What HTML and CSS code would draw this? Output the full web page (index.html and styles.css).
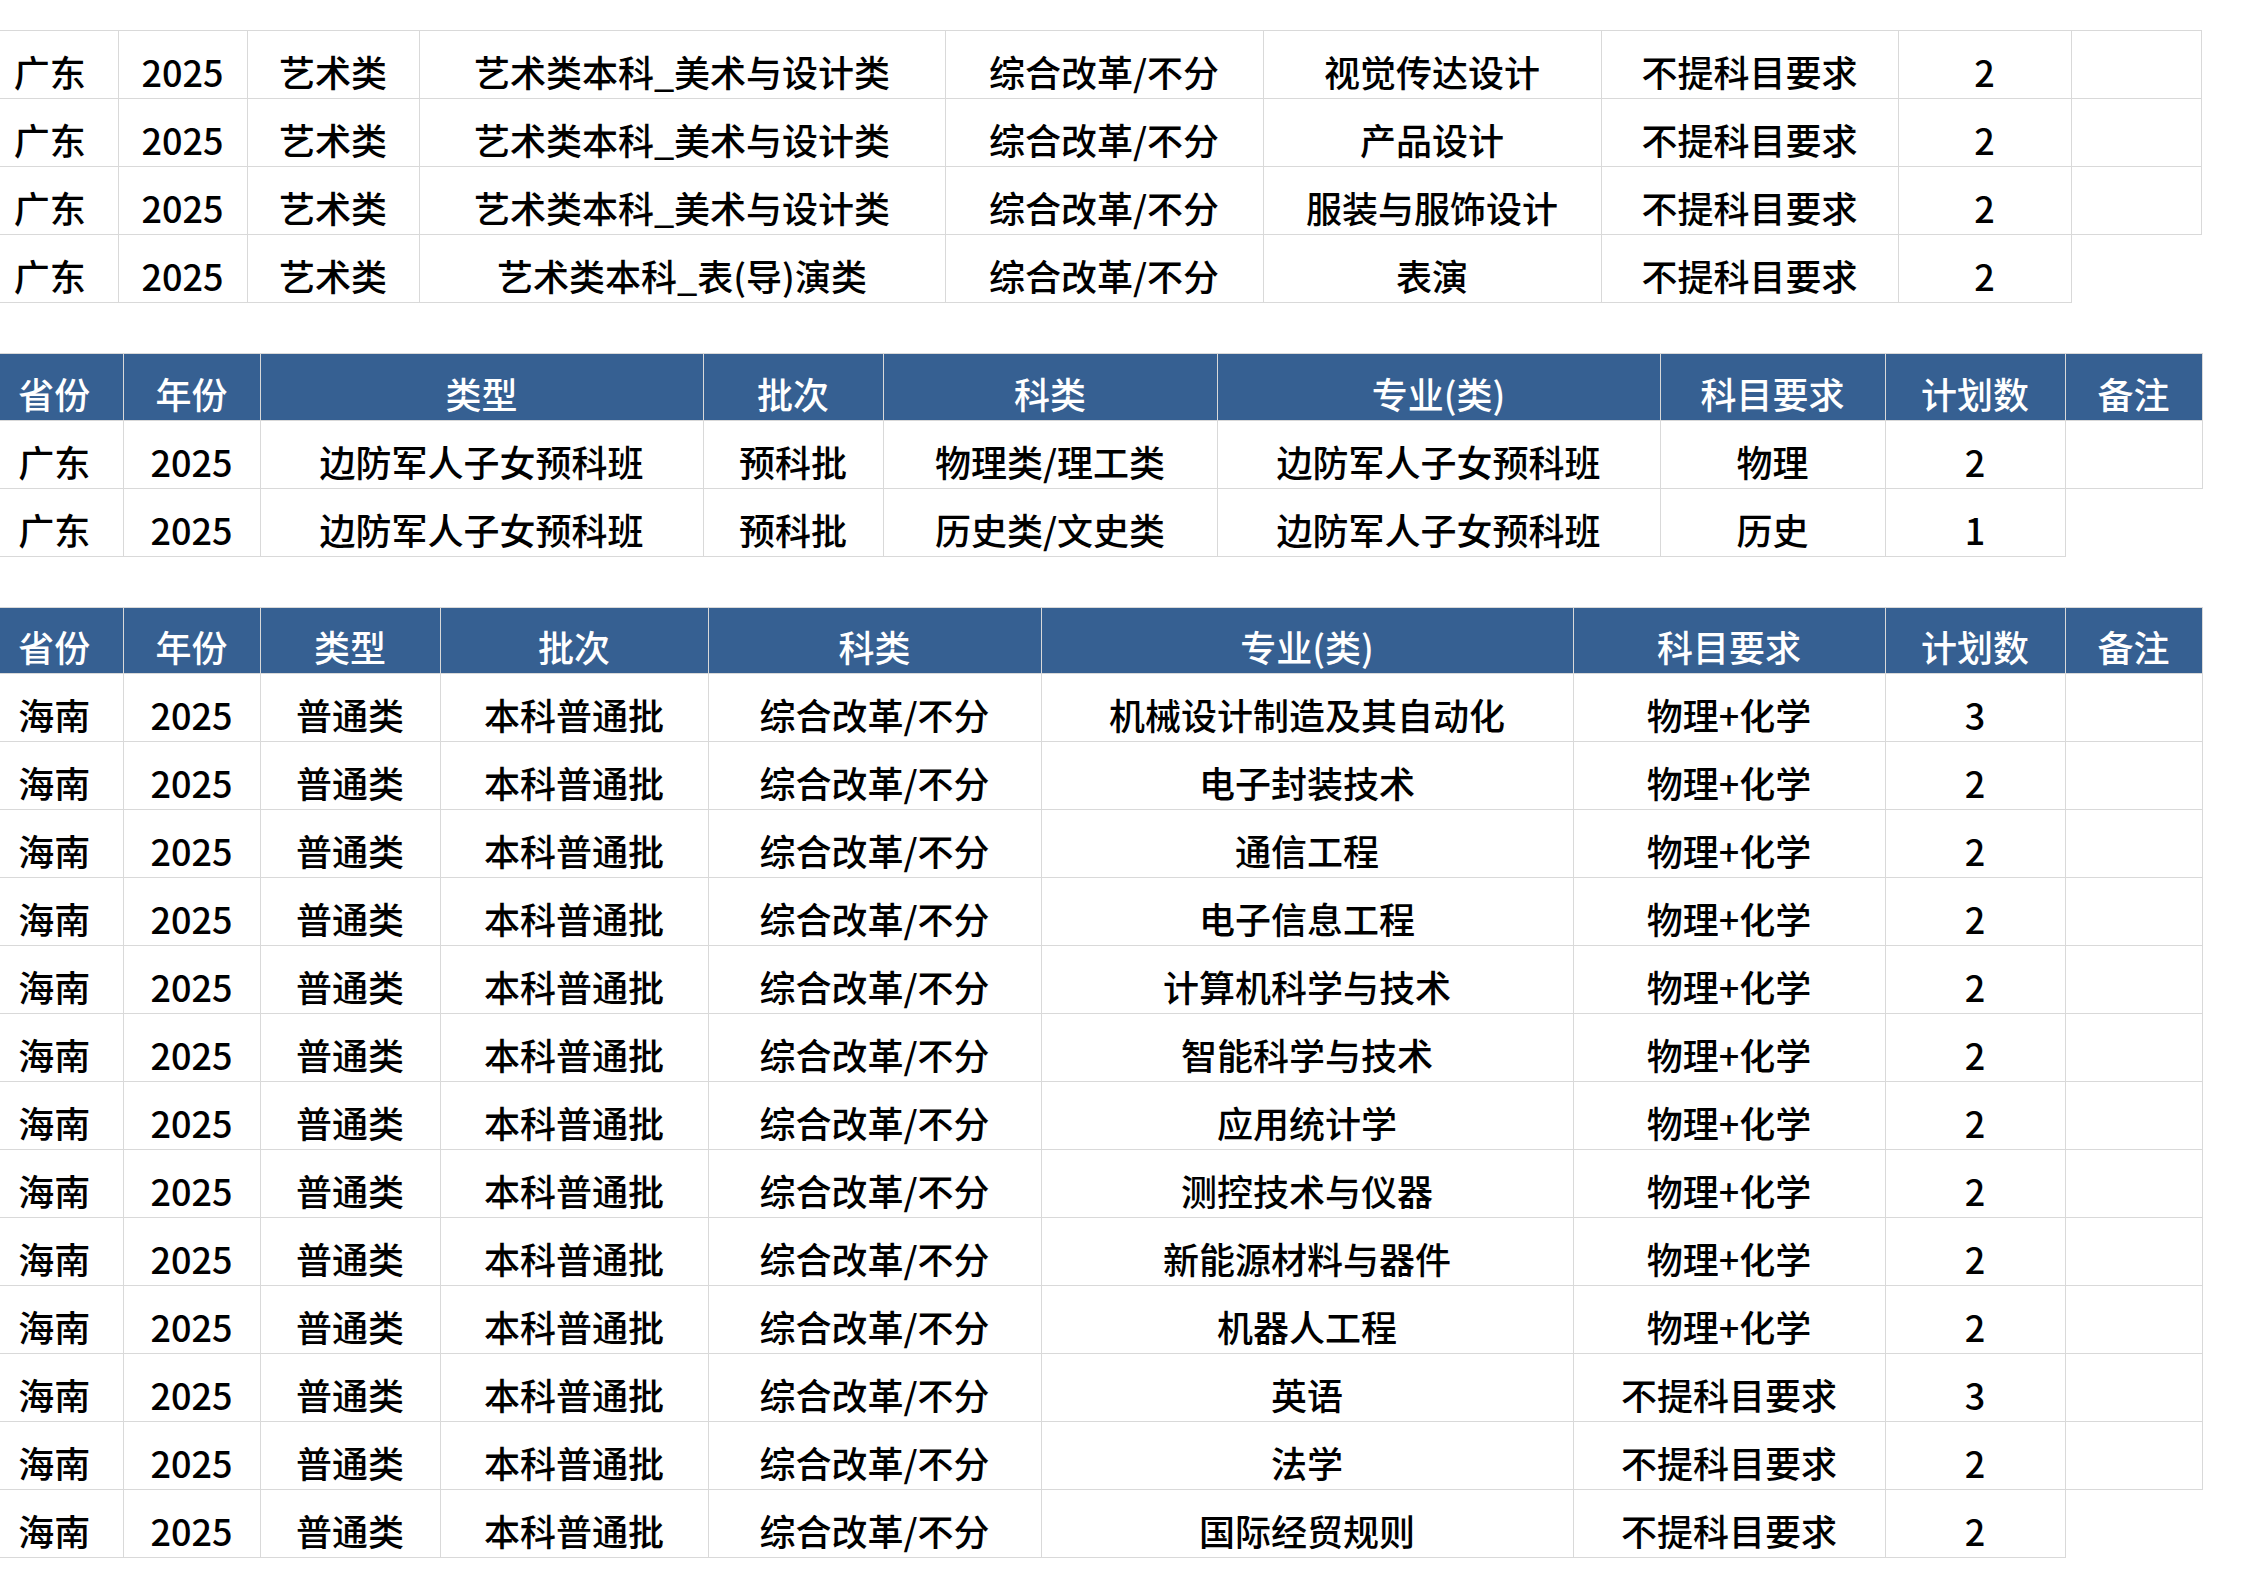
FILE: index.html
```html
<!DOCTYPE html>
<html lang="zh-CN">
<head>
<meta charset="utf-8">
<title>招生计划</title>
<link rel="stylesheet" href="styles.css">
</head>
<body>
<div class="sheet">
  <table class="grid t1">
    <colgroup>
      <col style="width:118px"><col style="width:129px"><col style="width:172px"><col style="width:526px"><col style="width:318px"><col style="width:338px"><col style="width:297px"><col style="width:173px"><col style="width:130px">
    </colgroup>
    <tr><td>广东</td><td>2025</td><td>艺术类</td><td>艺术类本科_美术与设计类</td><td>综合改革/不分</td><td>视觉传达设计</td><td>不提科目要求</td><td>2</td><td></td></tr>
    <tr><td>广东</td><td>2025</td><td>艺术类</td><td>艺术类本科_美术与设计类</td><td>综合改革/不分</td><td>产品设计</td><td>不提科目要求</td><td>2</td><td></td></tr>
    <tr><td>广东</td><td>2025</td><td>艺术类</td><td>艺术类本科_美术与设计类</td><td>综合改革/不分</td><td>服装与服饰设计</td><td>不提科目要求</td><td>2</td><td></td></tr>
    <tr><td>广东</td><td>2025</td><td>艺术类</td><td>艺术类本科_表(导)演类</td><td>综合改革/不分</td><td>表演</td><td>不提科目要求</td><td>2</td><td class="blank"></td></tr>
  </table>

  <table class="grid t2">
    <colgroup>
      <col style="width:123px"><col style="width:137px"><col style="width:443px"><col style="width:180px"><col style="width:334px"><col style="width:443px"><col style="width:225px"><col style="width:180px"><col style="width:137px">
    </colgroup>
    <tr class="head h2"><td>省份</td><td>年份</td><td>类型</td><td>批次</td><td>科类</td><td>专业(类)</td><td>科目要求</td><td>计划数</td><td>备注</td></tr>
    <tr><td>广东</td><td>2025</td><td>边防军人子女预科班</td><td>预科批</td><td>物理类/理工类</td><td>边防军人子女预科班</td><td>物理</td><td>2</td><td></td></tr>
    <tr><td>广东</td><td>2025</td><td>边防军人子女预科班</td><td>预科批</td><td>历史类/文史类</td><td>边防军人子女预科班</td><td>历史</td><td>1</td><td class="blank"></td></tr>
  </table>

  <table class="grid t3">
    <colgroup>
      <col style="width:123px"><col style="width:137px"><col style="width:180px"><col style="width:268px"><col style="width:333px"><col style="width:532px"><col style="width:312px"><col style="width:180px"><col style="width:137px">
    </colgroup>
    <tr class="head"><td>省份</td><td>年份</td><td>类型</td><td>批次</td><td>科类</td><td>专业(类)</td><td>科目要求</td><td>计划数</td><td>备注</td></tr>
    <tr><td>海南</td><td>2025</td><td>普通类</td><td>本科普通批</td><td>综合改革/不分</td><td>机械设计制造及其自动化</td><td>物理+化学</td><td>3</td><td></td></tr>
    <tr><td>海南</td><td>2025</td><td>普通类</td><td>本科普通批</td><td>综合改革/不分</td><td>电子封装技术</td><td>物理+化学</td><td>2</td><td></td></tr>
    <tr><td>海南</td><td>2025</td><td>普通类</td><td>本科普通批</td><td>综合改革/不分</td><td>通信工程</td><td>物理+化学</td><td>2</td><td></td></tr>
    <tr><td>海南</td><td>2025</td><td>普通类</td><td>本科普通批</td><td>综合改革/不分</td><td>电子信息工程</td><td>物理+化学</td><td>2</td><td></td></tr>
    <tr><td>海南</td><td>2025</td><td>普通类</td><td>本科普通批</td><td>综合改革/不分</td><td>计算机科学与技术</td><td>物理+化学</td><td>2</td><td></td></tr>
    <tr><td>海南</td><td>2025</td><td>普通类</td><td>本科普通批</td><td>综合改革/不分</td><td>智能科学与技术</td><td>物理+化学</td><td>2</td><td></td></tr>
    <tr><td>海南</td><td>2025</td><td>普通类</td><td>本科普通批</td><td>综合改革/不分</td><td>应用统计学</td><td>物理+化学</td><td>2</td><td></td></tr>
    <tr><td>海南</td><td>2025</td><td>普通类</td><td>本科普通批</td><td>综合改革/不分</td><td>测控技术与仪器</td><td>物理+化学</td><td>2</td><td></td></tr>
    <tr><td>海南</td><td>2025</td><td>普通类</td><td>本科普通批</td><td>综合改革/不分</td><td>新能源材料与器件</td><td>物理+化学</td><td>2</td><td></td></tr>
    <tr><td>海南</td><td>2025</td><td>普通类</td><td>本科普通批</td><td>综合改革/不分</td><td>机器人工程</td><td>物理+化学</td><td>2</td><td></td></tr>
    <tr><td>海南</td><td>2025</td><td>普通类</td><td>本科普通批</td><td>综合改革/不分</td><td>英语</td><td>不提科目要求</td><td>3</td><td></td></tr>
    <tr><td>海南</td><td>2025</td><td>普通类</td><td>本科普通批</td><td>综合改革/不分</td><td>法学</td><td>不提科目要求</td><td>2</td><td></td></tr>
    <tr><td>海南</td><td>2025</td><td>普通类</td><td>本科普通批</td><td>综合改革/不分</td><td>国际经贸规则</td><td>不提科目要求</td><td>2</td><td class="blank"></td></tr>
  </table>
</div>
</body>
</html>
```

FILE: styles.css
```css
html, body {
  margin: 0;
  padding: 0;
  background: #ffffff;
}

.sheet {
  display: flex;
  flex-direction: column;
  align-items: flex-start;
  gap: 50px;
  padding-top: 30px;
  font-family: "Noto Sans CJK SC", "Noto Sans", sans-serif;
  font-size: 36px;
  font-weight: 500;
  color: #000000;
}

.grid {
  border-collapse: collapse;
  table-layout: fixed;
}

.grid td {
  border: 1px solid #d9d9d9;
  height: 68px;
  padding: 0 0 9px 0;
  line-height: 36px;
  text-align: center;
  vertical-align: bottom;
  white-space: nowrap;
  box-sizing: border-box;
}

.grid td:first-child {
  border-left: none;
}

.t1 td:first-child {
  padding-right: 18px;
}

.t2 td:first-child,
.t3 td:first-child {
  padding-right: 14px;
}

.grid tr.head td {
  background: #366092;
  color: #ffffff;
  height: 66px;
}

.grid tr.head.h2 td {
  height: 67px;
}

.grid td.blank {
  border-right: none;
  border-bottom: none;
}
```
